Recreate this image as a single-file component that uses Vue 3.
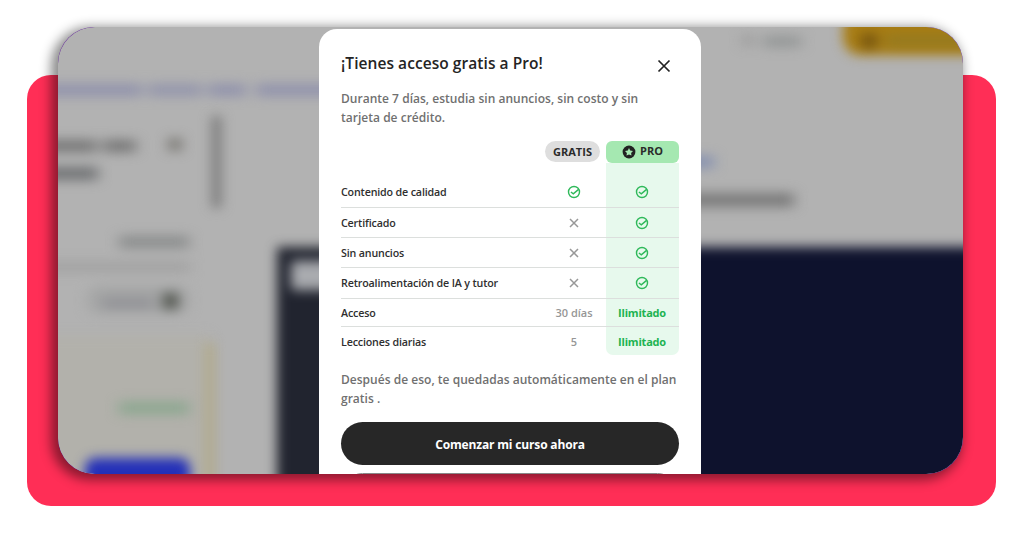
<script setup>
const rows = [
  { label: 'Contenido de calidad', free: 'check', pro: 'check' },
  { label: 'Certificado', free: 'cross', pro: 'check' },
  { label: 'Sin anuncios', free: 'cross', pro: 'check' },
  { label: 'Retroalimentación de IA y tutor', free: 'cross', pro: 'check' },
  { label: 'Acceso', free: '30 días', pro: 'Ilimitado' },
  { label: 'Lecciones diarias', free: '5', pro: 'Ilimitado' },
];
</script>

<template>
  <main class="page">
    <div class="card">
      <div class="window">
        <svg class="backdrop" width="905" height="447" viewBox="58 27 905 447" aria-hidden="true">
          <defs>
            <filter id="soft" x="-40%" y="-20%" width="180%" height="140%" color-interpolation-filters="sRGB">
              <feGaussianBlur stdDeviation="6" />
            </filter>
            <filter id="text" x="-30%" y="-50%" width="160%" height="200%" color-interpolation-filters="sRGB">
              <feGaussianBlur stdDeviation="7 6" />
            </filter>
          </defs>
          <rect x="58" y="27" width="905" height="447" fill="#b2b2b2" />
          <rect x="30" y="335" width="180" height="170" fill="#b2b1ab" filter="url(#soft)" />
          <g filter="url(#soft)">
            <rect x="205" y="343" width="10" height="160" fill="#b2a676" fill-opacity="0.6" />
            <rect x="277" y="247" width="424" height="270" fill="#21242f" />
            <rect x="690" y="247" width="330" height="270" fill="#0e122d" />
            <rect x="291" y="261" width="60" height="29" rx="4" fill="#a9abaf" />
            <rect x="843" y="12" width="150" height="43" rx="17" fill="#a87d14" />
            <rect x="85" y="458" width="105" height="50" rx="10" fill="#2430b8" />
            <rect x="211" y="116" width="11" height="92" fill="#828282" />
          </g>
          <g filter="url(#text)">
            <rect x="40" y="84" width="102" height="12" fill="#9092ac" />
            <rect x="148" y="84" width="54" height="12" fill="#9395ac" />
            <rect x="208" y="84" width="38" height="12" fill="#9092ac" />
            <rect x="256" y="84" width="80" height="12" fill="#9092ac" />
            <rect x="40" y="140" width="57" height="12" fill="#757575" />
            <rect x="103" y="140" width="33" height="12" fill="#757575" />
            <rect x="40" y="167" width="58" height="13" fill="#707274" />
            <rect x="169" y="138" width="12" height="13" fill="#73716b" />
            <rect x="119" y="236" width="70" height="12" fill="#8a8c8c" />
            <rect x="40" y="262" width="150" height="10" fill="#a1a1a1" />
            <rect x="88" y="286" width="100" height="28" rx="10" fill="#a4a5a5" />
            <rect x="103" y="299" width="50" height="8" fill="#8c8c92" />
            <rect x="164" y="293" width="13" height="16" fill="#454941" />
            <rect x="119" y="402" width="70" height="12" fill="#8ba78f" />
            <rect x="743" y="35" width="10" height="11" fill="#989898" />
            <rect x="763" y="36" width="38" height="11" fill="#939696" />
            <rect x="862" y="34" width="14" height="14" fill="#6b4d10" />
            <rect x="885" y="35" width="100" height="11" fill="#937a22" />
            <rect x="680" y="156" width="34" height="12" fill="#8490b0" />
            <rect x="680" y="193" width="114" height="14" fill="#7a7a7a" />
          </g>
        </svg>

        <section class="modal">
          <header class="head">
            <h1 class="title">¡Tienes acceso gratis a Pro!</h1>
            <svg class="close" width="14" height="14" viewBox="0 0 14 14">
              <path d="M1.5 1.5 12.5 12.5M12.5 1.5 1.5 12.5" />
            </svg>
          </header>
          <p class="intro">Durante 7 días, estudia sin anuncios, sin costo y sin<br />tarjeta de crédito.</p>

          <div class="plans">
            <span class="free-badge">GRATIS</span>
            <span class="pro-badge">
              <svg width="14" height="14" viewBox="0 0 14 14">
                <circle cx="7" cy="7" r="6.4" fill="#222" />
                <path d="M7 3 8.2 5.4 11 5.9 9.1 7.9 9.5 10.6 7 9.4 4.5 10.6 4.9 7.9 3 5.9 5.8 5.4Z" fill="#a5e8b1" />
              </svg>
              <span>PRO</span>
            </span>
          </div>

          <div class="table">
            <div class="row spacer"><span></span><span></span><span class="pro"></span></div>
            <div v-for="row in rows" :key="row.label" :class="['row', { short: row.pro !== 'check' }]">
              <span class="label">{{ row.label }}</span>
              <span v-for="plan in ['free', 'pro']" :key="plan" :class="['cell', plan]">
                <svg v-if="row[plan] === 'check'" class="check" width="14" height="14" viewBox="0 0 14 14">
                  <circle cx="7" cy="7" r="5.5" />
                  <path d="M3.9 7 6.3 8.9 11.6 4.4" />
                </svg>
                <svg v-else-if="row[plan] === 'cross'" class="cross" width="10" height="10" viewBox="0 0 10 10">
                  <path d="M1 1 9 9M9 1 1 9" />
                </svg>
                <span v-else>{{ row[plan] }}</span>
              </span>
            </div>
          </div>

          <p class="after">Después de eso, te quedadas automáticamente en el plan<br />gratis .</p>
          <button class="start">Comenzar mi curso ahora</button>
          <button class="later" aria-label="Cerrar"></button>
        </section>
      </div>
    </div>
  </main>
</template>

<style>
body {
  background: #fff;
  overflow: hidden;
}
</style>

<style scoped>
.page {
  box-sizing: border-box;
  width: 1024px;
  height: 536px;
  padding: 75px 28px 30px 27px;
  font-family: 'Open Sans', 'Noto Sans', sans-serif;
  font-weight: 600;
}
.card {
  display: flex;
  height: 431px;
  padding-left: 31px;
  border-radius: 24px;
  background: #ff2e56;
}
.window {
  display: grid;
  justify-items: start;
  width: 905px;
  height: 447px;
  margin-top: -48px;
  border-radius: 36px;
  overflow: hidden;
  background: #6b2fa0;
  box-shadow: -4px 3px 12px 3px rgba(0, 0, 0, 0.46);
}
.backdrop {
  grid-area: 1 / 1;
  border-radius: 37px;
}
.modal {
  position: relative;
  grid-area: 1 / 1;
  box-sizing: border-box;
  width: 382px;
  height: 470px;
  margin: 2px 0 0 261px;
  padding: 24px 22px 0;
  border-radius: 18px;
  background: #fff;
}
.head {
  display: flex;
  justify-content: space-between;
  height: 35.5px;
}
.title {
  margin: 0;
  color: #242424;
  font-size: 15.5px;
  font-weight: 600;
  line-height: 21px;
  letter-spacing: 0.06px;
  white-space: nowrap;
}
.close {
  margin: 6px 8px 0 0;
  fill: none;
  stroke: #222;
  stroke-width: 1.7;
}
.intro,
.after {
  margin: 0;
  color: #707070;
  font-size: 12px;
  line-height: 19px;
  letter-spacing: 0.02px;
  white-space: nowrap;
}
.plans {
  display: flex;
  justify-content: flex-end;
  gap: 6px;
  height: 22px;
  margin-top: 14.5px;
  color: #2b2b2b;
  font-size: 11px;
  font-weight: 700;
  line-height: 20px;
}
.free-badge,
.pro-badge {
  display: flex;
  align-items: center;
  justify-content: center;
}
.free-badge {
  width: 55px;
  height: 21px;
  border-radius: 11px;
  background: #dedede;
}
.pro-badge {
  gap: 4px;
  width: 73px;
  border-radius: 6px;
  background: #a5e8b1;
}
.pro-badge span {
  height: 22px;
}
.row {
  display: grid;
  grid-template-columns: 1fr 64px 73px;
  box-sizing: border-box;
  height: 30.2px;
  border-bottom: 1px solid #dcdfdd;
  color: #2f2f2f;
  font-size: 11px;
}
.row.spacer {
  height: 14.8px;
  border-bottom: 0;
}
.row.short {
  height: 28.4px;
}
.row:last-child {
  border-bottom: 0;
}
.label,
.cell {
  display: flex;
  align-items: center;
}
.label {
  font-size: 10.7px;
  letter-spacing: -0.16px;
}
.short .label {
  padding-top: 1px;
}
.cell {
  justify-content: center;
}
.cell.pro {
  padding-right: 1px;
}
.free {
  color: #969696;
}
.pro {
  background: #e7f9ed;
  color: #20b351;
  font-weight: 700;
  letter-spacing: -0.2px;
}
.row:last-child .pro {
  border-radius: 0 0 7px 7px;
}
.check {
  fill: none;
  stroke: #2fb95a;
  stroke-width: 1.4;
}
.cross {
  fill: none;
  stroke: #989898;
  stroke-width: 1.5;
}
.after {
  margin-top: 14.8px;
}
.start,
.later {
  display: block;
  width: 338px;
  height: 43px;
  padding: 0;
  border: 0;
  border-radius: 22px;
  background: #272727;
  color: #fff;
  font: 700 12px/45px 'Open Sans', sans-serif;
  letter-spacing: -0.16px;
}
.start {
  margin-top: 13.8px;
}
.later {
  margin-top: 8px;
  border: 1px solid #888;
  background: #fff;
}
</style>
